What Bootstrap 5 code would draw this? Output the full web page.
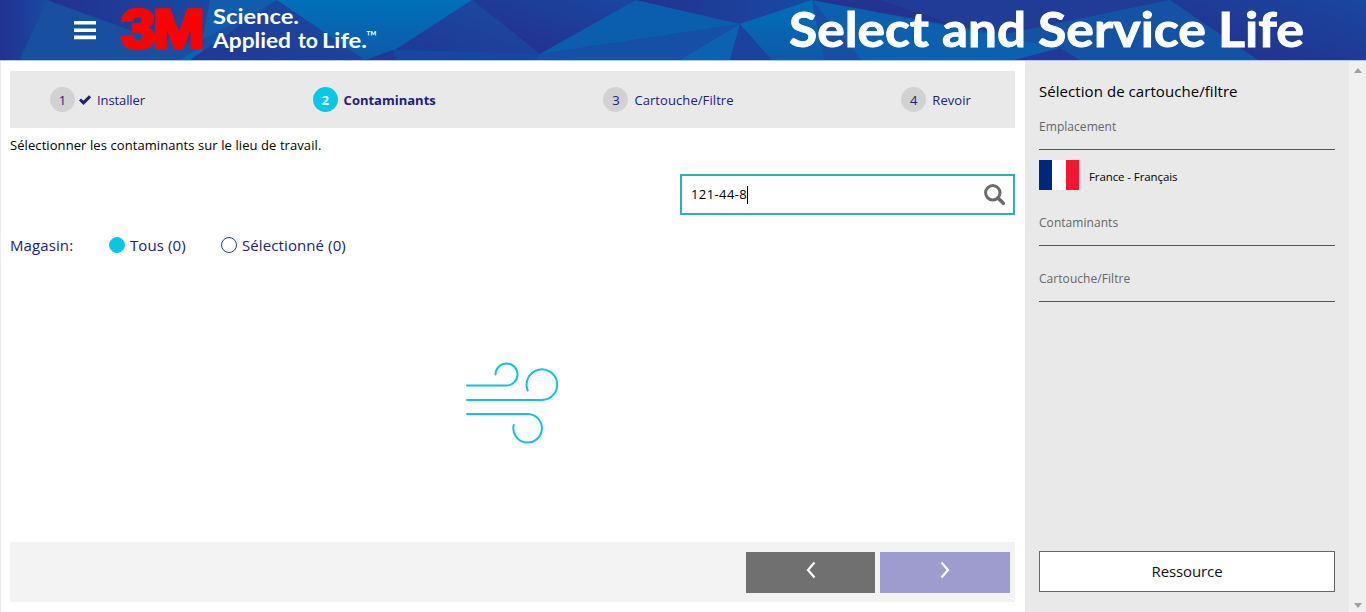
<!DOCTYPE html>
<html lang="fr">
<head>
<meta charset="utf-8">
<meta name="viewport" content="width=device-width, initial-scale=1">
<title>Select and Service Life</title>
<link href="https://cdn.jsdelivr.net/npm/bootstrap@5.3.0/dist/css/bootstrap.min.css" rel="stylesheet">
<style>
body{font-family:"Open Sans","Noto Sans",sans-serif;font-size:13px;line-height:20px;color:#000}
.topbar{height:61px;border-bottom:1px solid #afc7df;background:#1650a6;position:relative}
.facets{position:absolute;inset:0;width:100%;height:60px}
.topbar-inner{position:relative;height:60px}
.main-pane{width:1025px;padding:10px 10px 10px 9px;border-left:1px solid #eee}
.steps{height:57px;background:#e9e9e9;padding:0 44px 0 40px;color:#20207c}
.num{width:25px;height:25px;border-radius:50%;background:#d2d2d2;margin-right:6px}
.step-text{letter-spacing:.08px}
.active-step .num{background:#05c8e6;color:#fff}
.intro{margin-top:7px;letter-spacing:.08px}
.search{width:335px;height:41px;border:2px solid #2cb0ba;padding:0 8px 0 9px;margin-top:19px}
.query{letter-spacing:.4px;margin-top:-2px}
.caret{width:1px;height:18px;background:#000}
.filters{color:#22227e;font-size:15px;letter-spacing:.1px;margin-top:20px}
.dot{width:16px;height:16px;border-radius:50%;border:1px solid #22409a;margin-right:5px}
.dot.on{background:#05c8e6;border-color:#05c8e6}
.foot{height:60px;background:#f3f3f3;padding:10px 5px 9px;gap:5px}
.foot .btn{width:130px;height:41px;border:0}
.foot .btn svg{position:relative;top:-4px}
.foot .prev{width:129px}
.prev,.prev:hover{background:#707070}
.next,.next:hover{background:#9e9ccf}
.side{width:324px;background:#e9e9e9;padding:20px 14px}
.side-title{font-size:15px;letter-spacing:.06px}
.sec{color:#666;font-size:12px;border-bottom:1px solid #56535a;height:33px;letter-spacing:.05px}
.flag{width:40px;height:30px;background:linear-gradient(90deg,#00267f 33.33%,#fff 33.33% 66.66%,#f31830 66.66%)}
.res,.res:hover{height:41px;background:#fff;border:1px solid #666;color:#111;font-size:15px;letter-spacing:-.1px}
.rail{width:17px;background:#f0f0f0;padding:7px 0 4px}
</style>
</head>
<body class="vh-100 overflow-hidden d-flex flex-column">
<header class="topbar flex-shrink-0">
<svg class="facets" viewBox="0 0 1366 60" preserveAspectRatio="none">
<defs>
<linearGradient id="b" x1="0" y1="0" x2="0" y2="1"><stop stop-color="#0070b9"/><stop offset="1" stop-color="#0e59aa"/></linearGradient>
<linearGradient id="d" x1="1" y1="0" x2="0" y2="1"><stop stop-color="#1a4da2"/><stop offset="1" stop-color="#203795"/></linearGradient>
<linearGradient id="m" x1="0" y1="0" x2="1" y2="0"><stop stop-color="#23318f"/><stop offset="1" stop-color="#174ba3"/></linearGradient>
<linearGradient id="r" x1="1" y1="0" x2="0" y2="1"><stop stop-color="#19479f"/><stop offset=".8" stop-color="#233291"/></linearGradient>
</defs>
<path fill="url(#m)" d="M0 0H47L20 60H0z"/>
<path fill="#18509f" d="M47 0L135 32 205 60H20z"/>
<path fill="url(#m)" d="M47 0H225L202 46 135 32z"/>
<path fill="#0865b2" d="M180 60L202 46 205 60z"/>
<path fill="#0f5dac" d="M210 0H277L202 40z"/>
<path fill="url(#b)" d="M277 0H472L395 50 404 60H360z"/>
<path fill="url(#d)" d="M277 0L365 60H190z"/>
<path fill="#203994" d="M365 60L393 50 397 60z"/>
<path fill="url(#d)" d="M472 0L540 54 395 50z"/>
<path fill="#1747a0" d="M393 50L540 54 535 60H397z"/>
<path fill="url(#r)" d="M472 0H636L540 54z"/>
<path fill="#0b5eae" d="M636 0L740 24 540 54z"/>
<path fill="url(#m)" d="M636 0H812L740 24z"/>
<path fill="#154fa6" d="M540 54L740 24 680 60H583z"/>
<path fill="#0b62b1" d="M740 24L680 60H730z"/>
<path fill="#1b439d" d="M740 24L730 60H772z"/>
<path fill="url(#b)" d="M740 24L812 0 824 60H772z"/>
<path fill="#0b60b0" d="M812 0L1060 48 1015 60H824z"/>
<path fill="#174fa5" d="M812 0L862 60H824z"/>
<path fill="#23338f" d="M812 0H1170L960 27z"/>
<path fill="#203c97" d="M880 0H1170L1010 34 960 27z"/>
<path fill="#1452a6" d="M1170 0L1260 60H1080L1060 48 1000 35z"/>
<path fill="#22389a" d="M1015 60L1060 48 1080 60z"/>
<path fill="url(#r)" d="M1170 0H1366V60H1258z"/>
</svg>
<div class="topbar-inner">
<svg class="d-block overflow-visible" width="1366" height="60" viewBox="0 0 1366 60" fill="#fff">
<path d="M74 21h22v3.600H74zM74 28.400h22V32H74zM74 35.600h22v3.600H74z"/>
<text x="121" y="48" textLength="81" lengthAdjust="spacingAndGlyphs" letter-spacing="-2.500" font-family="Liberation Sans,sans-serif" font-weight="700" font-size="56" fill="#f00" stroke="#f00" stroke-width="3.400">3M</text>
<g font-family="Lato,sans-serif" font-weight="700">
<text x="213" y="24" font-size="21" textLength="86" lengthAdjust="spacingAndGlyphs">Science.</text>
<g font-size="21"><text x="213" y="48" textLength="78" lengthAdjust="spacingAndGlyphs">Applied</text>
<text x="298" y="48" textLength="20" lengthAdjust="spacingAndGlyphs">to</text>
<text x="322" y="48" textLength="45" lengthAdjust="spacingAndGlyphs">Life.</text></g>
<text x="366" y="42" font-size="15" font-weight="400" textLength="11" lengthAdjust="spacingAndGlyphs">™</text>
<g font-size="47" stroke="#fff" stroke-width=".9"><text x="789" y="47" textLength="140" lengthAdjust="spacingAndGlyphs">Select</text>
<text x="942" y="47" textLength="84" lengthAdjust="spacingAndGlyphs">and</text>
<text x="1038" y="47" textLength="168" lengthAdjust="spacingAndGlyphs">Service</text>
<text x="1218" y="47" textLength="86" lengthAdjust="spacingAndGlyphs">Life</text></g>
</g>
</svg>
</div>
</header>
<div class="d-flex flex-grow-1">
<main class="main-pane d-flex flex-column">
<nav class="steps d-flex align-items-center justify-content-between">
<div class="d-flex align-items-center"><span class="num d-flex align-items-center justify-content-center me-1">1</span><svg width="12" height="10" viewBox="0 0 12 10" fill="none" stroke="#20207c" stroke-width="3"><path d="M1 4.500l3.500 3.300L11 1.300"/></svg><span style="margin-left:6px;letter-spacing:-.1px">Installer</span></div>
<div class="d-flex align-items-center fw-bold active-step"><span class="num d-flex align-items-center justify-content-center">2</span><span>Contaminants</span></div>
<div class="d-flex align-items-center"><span class="num d-flex align-items-center justify-content-center">3</span><span class="step-text">Cartouche/Filtre</span></div>
<div class="d-flex align-items-center"><span class="num d-flex align-items-center justify-content-center">4</span><span class="step-text">Revoir</span></div>
</nav>
<div class="intro">Sélectionner les contaminants sur le lieu de travail.</div>
<div class="search d-flex align-items-center align-self-end">
<span class="query">121-44-8</span><span class="caret"></span>
<svg class="ms-auto" width="21" height="21" viewBox="0 0 21 21" fill="none" stroke="#6c6c6c"><circle cx="8.800" cy="8.800" r="7.200" stroke-width="3"/><path d="M14 14l5.300 5.300" stroke-width="3.600" stroke-linecap="round"/></svg>
</div>
<div class="filters d-flex align-items-center">
<span style="width:99px">Magasin:</span>
<span class="dot on"></span><span style="width:91px">Tous (0)</span>
<span class="dot"></span><span>Sélectionné (0)</span>
</div>
<div class="flex-grow-1 d-flex justify-content-center pt-5">
<svg style="margin-top:57px" width="96" height="86" viewBox="465 360 96 86" fill="none" stroke="#10c4dc" stroke-width="2" stroke-linecap="round"><path d="M467 385.500h39.500a11 11 0 1 0-11-11M467 400h75a15.300 15.300 0 1 0-14.300-9.500M467 414h61a14.300 14.300 0 1 1-14.300 11"/></svg>
</div>
<div class="foot d-flex justify-content-end">
<button class="btn prev rounded-0 p-0" aria-label="Précédent"><svg width="10" height="18" viewBox="0 0 10 18" fill="none" stroke="#fff" stroke-width="2.200"><path d="M8.500 1.500L2 9l6.500 7.500"/></svg></button>
<button class="btn next rounded-0 p-0" aria-label="Suivant"><svg width="10" height="18" viewBox="0 0 10 18" fill="none" stroke="#fff" stroke-width="2.200"><path d="M1.500 1.500L8 9l-6.500 7.500"/></svg></button>
</div>
</main>
<aside class="side d-flex flex-column">
<div class="side-title">Sélection de cartouche/filtre</div>
<div class="sec" style="margin-top:16px">Emplacement</div>
<div class="d-flex align-items-center" style="margin-top:10px"><span class="flag"></span><span style="margin:4px 0 0 10px;font-size:11.500px;line-height:18px;letter-spacing:-.1px">France - Français</span></div>
<div class="sec" style="margin-top:23px">Contaminants</div>
<div class="sec" style="margin-top:23px">Cartouche/Filtre</div>
<button class="btn res rounded-0 p-0 mt-auto">Ressource</button>
</aside>
<div class="rail d-flex flex-column align-items-center justify-content-between">
<svg width="8" height="5" fill="#a0a0a0"><path d="M0 5l4-5 4 5z"/></svg>
<svg width="8" height="5" fill="#a0a0a0"><path d="M0 0l4 5 4-5z"/></svg>
</div>
</div>
<script src="https://cdn.jsdelivr.net/npm/bootstrap@5.3.0/dist/js/bootstrap.bundle.min.js"></script>
</body>
</html>
